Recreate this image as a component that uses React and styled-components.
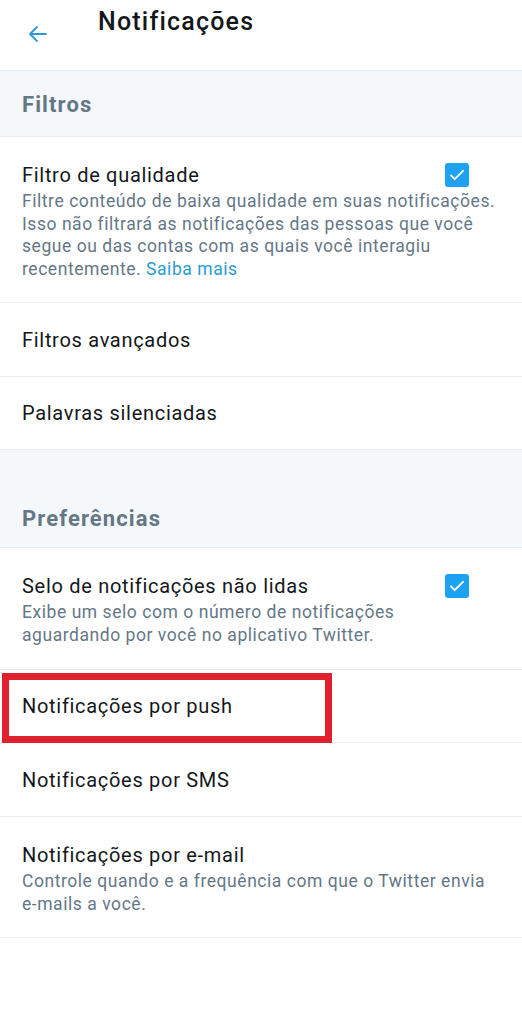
import React from "react";
import styled, { createGlobalStyle } from "styled-components";

const GlobalStyle = createGlobalStyle`
  html, body {
    margin: 0;
    padding: 0;
    background: #ffffff;
  }
  body {
    font-family: Roboto, "Noto Sans", "Liberation Sans", sans-serif;
    -webkit-font-smoothing: antialiased;
  }
`;

const Page = styled.div`
  width: 522px;
  min-height: 1024px;
  background: #fff;
`;

const Header = styled.header`
  height: 71px;
  display: flex;
  align-items: flex-start;
  border-bottom: 1px solid #e6ecf0;
  box-sizing: border-box;
`;

const BackButton = styled.button`
  border: none;
  background: none;
  padding: 0;
  margin: 22px 0 0 26px;
  width: 24px;
  height: 24px;
  display: flex;
  align-items: center;
  justify-content: center;
  cursor: pointer;
`;

const Title = styled.h1`
  margin: 6px 0 0 48px;
  font-size: 25px;
  line-height: 32px;
  letter-spacing: 1.2px;
  font-weight: 500;
  color: #14171a;
`;

const SectionHeader = styled.div`
  background: #f5f8fa;
  height: ${(p) => p.$height}px;
  padding: 0 22px ${(p) => p.$bottom}px;
  display: flex;
  align-items: flex-end;
  box-sizing: border-box;
  border-bottom: 1px solid #e6ecf0;
  font-size: 22px;
  letter-spacing: 1.1px;
  font-weight: 700;
  color: #657786;
`;

const Row = styled.div`
  position: relative;
  display: flex;
  align-items: ${(p) => (p.$simple ? "center" : "flex-start")};
  justify-content: space-between;
  min-height: ${(p) => p.$height}px;
  padding: ${(p) => (p.$simple ? "0 22px" : "25px 53px 21px 22px")};
  box-sizing: border-box;
  border-bottom: 1px solid #e6ecf0;
`;

const TextBlock = styled.div`
  display: flex;
  flex-direction: column;
  flex: 1;
`;

const RowTitle = styled.div`
  font-size: 20px;
  line-height: 26px;
  letter-spacing: 0.7px;
  color: #14171a;
`;

const RowDesc = styled.div`
  margin-top: 2px;
  font-size: 17.5px;
  line-height: 22.5px;
  letter-spacing: 0.55px;
  color: #657786;
  margin-right: ${(p) => (p.$wide ? "-52px" : "0")};
`;

const NoWrap = styled.span`
  white-space: nowrap;
`;

const Link = styled.a`
  color: #2a9bd0;
  text-decoration: none;
`;

const Checkbox = styled.span`
  flex: none;
  width: 24px;
  height: 24px;
  margin-top: 1px;
  border-radius: 3px;
  background: #1da1f2;
  display: flex;
  align-items: center;
  justify-content: center;
`;

const Highlight = styled.span`
  position: absolute;
  left: 2px;
  top: 3px;
  width: 330px;
  height: 70px;
  border: 7px solid #e0202c;
  box-sizing: border-box;
  pointer-events: none;
`;

const Check = () => (
  <Checkbox>
    <svg width="18" height="18" viewBox="0 0 24 24" fill="none">
      <path d="M4 12.5l5 5L20 6.5" stroke="#fff" strokeWidth="2.6" strokeLinecap="round" strokeLinejoin="round" />
    </svg>
  </Checkbox>
);

const App = () => {
  return (
    <Page>
      <GlobalStyle />
      <Header>
        <BackButton aria-label="Voltar">
          <svg width="24" height="24" viewBox="0 0 24 24" fill="none">
            <path d="M20 12H4M11 5l-7 7 7 7" stroke="#2a9bd8" strokeWidth="1.8" strokeLinecap="round" strokeLinejoin="round" />
          </svg>
        </BackButton>
        <Title>Notificações</Title>
      </Header>

      <SectionHeader $height={66} $bottom={19}>Filtros</SectionHeader>

      <Row $height={166}>
        <TextBlock>
          <RowTitle>Filtro de qualidade</RowTitle>
          <RowDesc $wide>
            Filtre conteúdo de baixa qualidade em suas notificações. Isso não filtrará as notificações das pessoas que você
            segue ou das contas com as quais você interagiu recentemente. <Link href="#">Saiba mais</Link>
          </RowDesc>
        </TextBlock>
        <Check />
      </Row>
      <Row $simple $height={74}>
        <RowTitle>Filtros avançados</RowTitle>
      </Row>
      <Row $simple $height={73}>
        <RowTitle>Palavras silenciadas</RowTitle>
      </Row>

      <SectionHeader $height={98} $bottom={16}>Preferências</SectionHeader>

      <Row $height={122}>
        <TextBlock>
          <RowTitle>Selo de notificações não lidas</RowTitle>
          <RowDesc>Exibe um selo com o número de notificações aguardando por você no aplicativo Twitter.</RowDesc>
        </TextBlock>
        <Check />
      </Row>
      <Row $simple $height={73}>
        <RowTitle>Notificações por push</RowTitle>
        <Highlight />
      </Row>
      <Row $simple $height={74}>
        <RowTitle>Notificações por SMS</RowTitle>
      </Row>
      <Row $height={121}>
        <TextBlock>
          <RowTitle>Notificações por e-mail</RowTitle>
          <RowDesc $wide>
            Controle quando e a frequência com que o Twitter envia <NoWrap>e-mails</NoWrap> a você.
          </RowDesc>
        </TextBlock>
      </Row>
    </Page>
  );
};

export default App;
